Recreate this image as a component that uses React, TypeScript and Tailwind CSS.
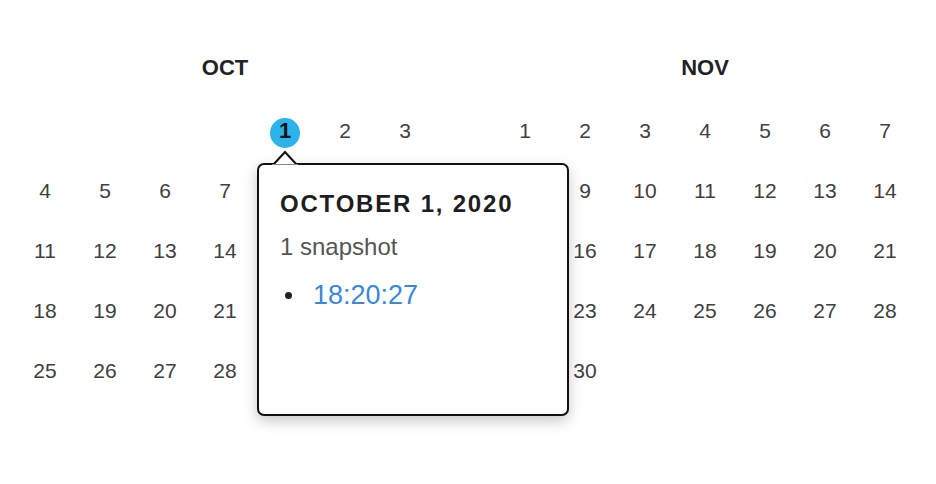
import React from "react";

type Cell = number | null;

// dates hidden under the popup are left empty
const oct: Cell[][] = [
  [null, null, null, null, 1, 2, 3],
  [4, 5, 6, 7, null, null, null],
  [11, 12, 13, 14, null, null, null],
  [18, 19, 20, 21, null, null, null],
  [25, 26, 27, 28, null, null, null],
];

const nov: Cell[][] = [
  [1, 2, 3, 4, 5, 6, 7],
  [null, 9, 10, 11, 12, 13, 14],
  [null, 16, 17, 18, 19, 20, 21],
  [null, 23, 24, 25, 26, 27, 28],
  [null, 30, null, null, null, null, null],
];

function Month({ title, rows, highlight }: { title: string; rows: Cell[][]; highlight?: number }) {
  return (
    <div className="w-[420px] flex flex-col">
      <div className="h-[30px] leading-[30px] text-center text-[22px] font-bold text-[#222] mb-[18px]">{title}</div>
      <div className="grid grid-cols-7">
        {rows.flat().map((d, i) => (
          <div key={i} className="relative h-[60px] flex items-center justify-center">
            {d !== null && d === highlight && (
              <div className="absolute left-1/2 top-1/2 -translate-x-1/2 -translate-y-1/2 mt-[2px] w-[30px] h-[30px] rounded-full bg-[#2bb3ea]" />
            )}
            {d !== null && (
              <span
                className={
                  d === highlight
                    ? "relative text-[22px] leading-[24px] font-bold text-[#111]"
                    : "relative text-[21px] leading-[24px] text-[#404040]"
                }
              >
                {d}
              </span>
            )}
          </div>
        ))}
      </div>
    </div>
  );
}

export default function App() {
  return (
    <div className="relative w-[936px] h-[484px] bg-white font-['Liberation_Sans',Arial,sans-serif] overflow-hidden">
      <div className="flex gap-[60px] px-[15px] pt-[53px]">
        <Month title="OCT" rows={oct} highlight={1} />
        <Month title="NOV" rows={nov} />
      </div>

      {/* popup */}
      <div className="absolute left-[257px] top-[163px] w-[312px] h-[253px] bg-white border-2 border-[#111] rounded-[7px] shadow-[0_5px_14px_rgba(0,0,0,0.22)] pl-[21px] pt-[25px]">
        <div className="text-[24px] leading-[28px] font-bold tracking-[1.8px] text-[#1e1e1e]">OCTOBER 1, 2020</div>
        <div className="mt-[15px] text-[24px] leading-[28px] text-[#555]">1 snapshot</div>
        <div className="mt-[18px] flex items-center">
          <span className="ml-[5px] w-[7px] h-[7px] rounded-full bg-[#222]" />
          <span className="ml-[21px] text-[27px] leading-[32px] text-[#3a88d6]">18:20:27</span>
        </div>
      </div>
      <svg className="absolute left-[272px] top-[150px]" width="26" height="16" viewBox="0 0 26 16">
        <polygon points="1,15 13,2 25,15" fill="white" stroke="#111" strokeWidth="2" strokeLinejoin="miter" />
        <rect x="0" y="14.5" width="26" height="3" fill="white" />
      </svg>
    </div>
  );
}
